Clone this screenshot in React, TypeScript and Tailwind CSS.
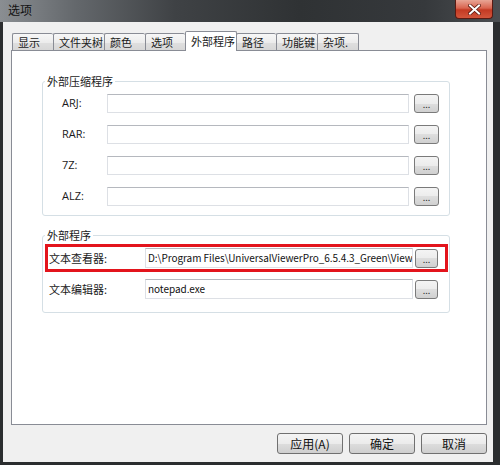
import React from "react";

const tabs: { label: string; w: string; sel?: boolean; last?: boolean }[] = [
  { label: "显示", w: "w-[41px]" },
  { label: "文件夹树", w: "w-[51px]" },
  { label: "颜色", w: "w-[41px]" },
  { label: "选项", w: "w-[40px]" },
  { label: "外部程序", w: "w-[52px]", sel: true },
  { label: "路径", w: "w-[40px]" },
  { label: "功能键", w: "w-[41px]" },
  { label: "杂项.", w: "w-[42px]", last: true },
];

function Browse({ h = "h-[19px]", w = "w-[25px]" }: { h?: string; w?: string }) {
  return (
    <div
      className={`${w} ${h} shrink-0 rounded-[3px] border border-[#7a7a7a] bg-[linear-gradient(#f4f4f4_0%,#ececec_50%,#dedede_50%,#d0d0d0_100%)] flex items-center justify-center text-[9px] leading-none text-[#333] pt-[2px]`}
    >
      ...
    </div>
  );
}

function Field({ w, h, text }: { w: string; h: string; text?: string }) {
  return (
    <div
      className={`${w} ${h} shrink-0 bg-white border border-[#dde0e5] border-t-[#b5b8be] overflow-hidden whitespace-nowrap text-[10px] leading-[18px] pl-[2px] text-[#111] tracking-[-0.05px]`}
    >
      {text}
    </div>
  );
}

export default function App() {
  const archives = ["ARJ:", "RAR:", "7Z:", "ALZ:"];
  return (
    <div className="w-[500px] h-[465px] overflow-hidden flex flex-col bg-[#2b2d2f] font-['Noto_Sans_CJK_SC',sans-serif] text-[#1a1a1a]">
      {/* title bar */}
      <div className="h-[22px] shrink-0 flex items-start bg-[linear-gradient(90deg,#8a8e92_0%,#64686c_15%,#3f4245_35%,#2f3234_60%,#36393c_85%,#4b4e51_100%)]">
        <div className="pl-[8px] pt-[2px] text-[12px] leading-[16px] text-[#111]">选项</div>
        <div className="ml-auto mr-[7px] w-[38px] h-[19px] rounded-b-[4px] border border-t-0 border-[#5a1a12] bg-[linear-gradient(#e8a595_0%,#d9644f_45%,#c33a23_55%,#d2553b_100%)] flex items-center justify-center">
          <svg width="13" height="11" viewBox="0 0 13 11">
            <path d="M2 1.5 L11 9.5 M11 1.5 L2 9.5" stroke="#5b1a10" strokeWidth="3.6" strokeLinecap="square" />
            <path d="M2 1.5 L11 9.5 M11 1.5 L2 9.5" stroke="#ffffff" strokeWidth="2" strokeLinecap="square" />
          </svg>
        </div>
      </div>

      {/* client */}
      <div className="ml-[3px] mr-[7px] mb-[3px] flex-1 bg-[#f0f0f0] flex flex-col pt-[9px] pl-[8px] pr-[6px] text-[11px]">
        {/* tabs */}
        <div className="h-[20px] flex items-start ml-[1px]">
          {tabs.map((t) =>
            t.sel ? (
              <div
                key={t.label}
                className={`${t.w} h-[20px] relative z-10 bg-white border-l border-t border-r border-[#898c95] -mr-px pl-[5px] pt-[2px] leading-[14px] rounded-t-[2px]`}
              >
                {t.label}
              </div>
            ) : (
              <div
                key={t.label}
                className={`${t.w} h-[18px] mt-[2px] border-l border-t ${t.last ? "border-r" : ""} border-[#898c95] bg-[linear-gradient(#f7f7f7_0%,#ececec_50%,#dfdfdf_51%,#d6d6d6_100%)] pl-[5px] pt-[1px] leading-[14px] rounded-t-[2px]`}
              >
                {t.label}
              </div>
            )
          )}
        </div>

        {/* tab panel */}
        <div className="-mt-px h-[375px] bg-white border border-[#898c95] flex flex-col">
          <fieldset className="ml-[30px] mt-[23px] w-[408px] border border-[#d5dfe5] rounded-[3px] pb-[9px]">
            <legend className="ml-[2px] px-[2px] leading-[14px]">外部压缩程序</legend>
            <div className="flex flex-col gap-[12px] mt-[6px]">
              {archives.map((a) => (
                <div key={a} className="flex items-center pl-[19px]">
                  <div className="w-[45px] font-['Open_Sans',sans-serif] text-[11px]">{a}</div>
                  <Field w="w-[302px]" h="h-[19px]" />
                  <div className="ml-[5px]">
                    <Browse />
                  </div>
                </div>
              ))}
            </div>
          </fieldset>

          <fieldset className="ml-[30px] mt-[12px] w-[408px] border border-[#d5dfe5] rounded-[3px] pb-[12px]">
            <legend className="ml-[2px] px-[2px] leading-[14px]">外部程序</legend>
            <div className="mt-[2px] ml-[2px] w-[403px] h-[28px] border-[3px] border-[#e3141c] flex items-center pl-[1px]">
              <div className="w-[96px]">文本查看器:</div>
              <Field
                w="w-[268px]"
                h="h-[20px]"
                text="D:\Program Files\UniversalViewerPro_6.5.4.3_Green\Viewer.exe"
              />
              <div className="ml-[2px]">
                <Browse w="w-[23px]" h="h-[19px]" />
              </div>
            </div>
            <div className="mt-[6px] h-[22px] flex items-center pl-[6px]">
              <div className="w-[96px]">文本编辑器:</div>
              <Field w="w-[268px]" h="h-[20px]" text="notepad.exe" />
              <div className="ml-[2px]">
                <Browse w="w-[23px]" h="h-[19px]" />
              </div>
            </div>
          </fieldset>
        </div>

        {/* bottom buttons */}
        <div className="mt-[8px] flex justify-end gap-[6px]">
          {["应用(A)", "确定", "取消"].map((b) => (
            <div
              key={b}
              className="w-[66px] h-[21px] rounded-[3px] border border-[#707070] bg-[linear-gradient(#f4f4f4_0%,#ebebeb_50%,#dddddd_50%,#cfcfcf_100%)] flex items-center justify-center leading-none text-[12px] text-[#111]"
            >
              {b}
            </div>
          ))}
        </div>
      </div>
    </div>
  );
}
